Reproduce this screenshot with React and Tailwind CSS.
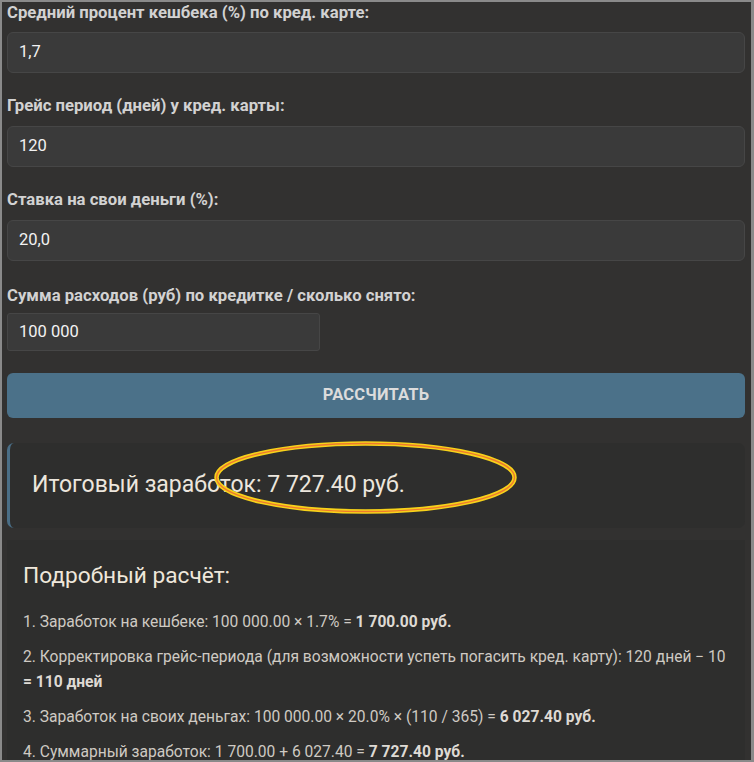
import React from "react";

const font = { fontFamily: "Roboto, 'Liberation Sans', sans-serif" };

function Field({ label, value, labelClass, inputClass }) {
  return (
    <div className="flex flex-col">
      <div className={"text-[16.7px] leading-[20px] font-bold text-[#d2d2d2] " + labelClass}>{label}</div>
      <div className={"flex items-center bg-[#3a3a3a] border border-[#464646] text-[16.5px] text-[#f2f2f2] pl-[11px] " + inputClass}>
        {value}
      </div>
    </div>
  );
}

export default function App() {
  return (
    <div style={font} className="w-[754px] h-[762px] overflow-hidden bg-[#8a8a8a] pl-[2px] pt-[2px] pr-[3px] pb-[2px]">
      <div className="relative w-full h-full overflow-hidden bg-[#323130] pl-[5px] pr-[6px]">
        <div className="flex flex-col">
          <div className="pt-[1px]">
            <Field label="Средний процент кешбека (%) по кред. карте:" value="1,7" labelClass="mb-[9px]" inputClass="h-[41px] rounded-[6px]" />
          </div>
          <div className="mt-[23px]">
            <Field label="Грейс период (дней) у кред. карты:" value="120" labelClass="mb-[10px]" inputClass="h-[41px] rounded-[6px]" />
          </div>
          <div className="mt-[23px]">
            <Field label="Ставка на свои деньги (%):" value="20,0" labelClass="mb-[10px]" inputClass="h-[41px] rounded-[6px]" />
          </div>
          <div className="mt-[25px]">
            <Field label="Сумма расходов (руб) по кредитке / сколько снято:" value="100 000" labelClass="mb-[7px]" inputClass="h-[38px] w-[313px] rounded-[3px]" />
          </div>
          <div className="mt-[22px] h-[45px] rounded-[6px] bg-[#4b7189] flex items-center justify-center text-[16.5px] font-bold text-[#dcdcdc] tracking-[0.2px]">
            РАССЧИТАТЬ
          </div>
          <div className="mt-[25px] h-[85px] rounded-[7px] border-l-[3px] border-[#4a6e86] bg-[#2e2e2d] flex items-center pl-[22px] text-[23px] text-[#ece6dd]">
            Итоговый заработок: 7 727.40 руб.
          </div>
          <div className="mt-[12px] bg-[#2e2e2d] px-[16px] pt-[22px] pb-[16px] text-[#cfcac3]">
            <div className="text-[22.7px] leading-[28px] text-[#efe7db] mb-[20px]">Подробный расчёт:</div>
            <p className="text-[15.6px] leading-[25px] mb-[10px]">
              1. Заработок на кешбеке: 100 000.00 × 1.7% = <b className="text-[#dedad4]">1 700.00 руб.</b>
            </p>
            <p className="text-[15.6px] leading-[25px] mb-[10px]">
              2. Корректировка грейс-периода (для возможности успеть погасить кред. карту): 120 дней − 10 <b className="text-[#dedad4]">= 110 дней</b>
            </p>
            <p className="text-[15.6px] leading-[25px] mb-[10px]">
              3. Заработок на своих деньгах: 100 000.00 × 20.0% × (110 / 365) = <b className="text-[#dedad4]">6 027.40 руб.</b>
            </p>
            <p className="text-[15.6px] leading-[25px] mb-[10px]">
              4. Суммарный заработок: 1 700.00 + 6 027.40 = <b className="text-[#dedad4]">7 727.40 руб.</b>
            </p>
          </div>
        </div>
        <svg className="absolute left-0 top-0 pointer-events-none" width="754" height="762">
          <ellipse cx="363.5" cy="475.5" rx="149" ry="34" fill="none" stroke="#f7d21a" strokeWidth="4.5" />
          <ellipse cx="363.5" cy="475.5" rx="149" ry="34" fill="none" stroke="#ee7a2e" strokeWidth="1.3" />
        </svg>
      </div>
    </div>
  );
}
